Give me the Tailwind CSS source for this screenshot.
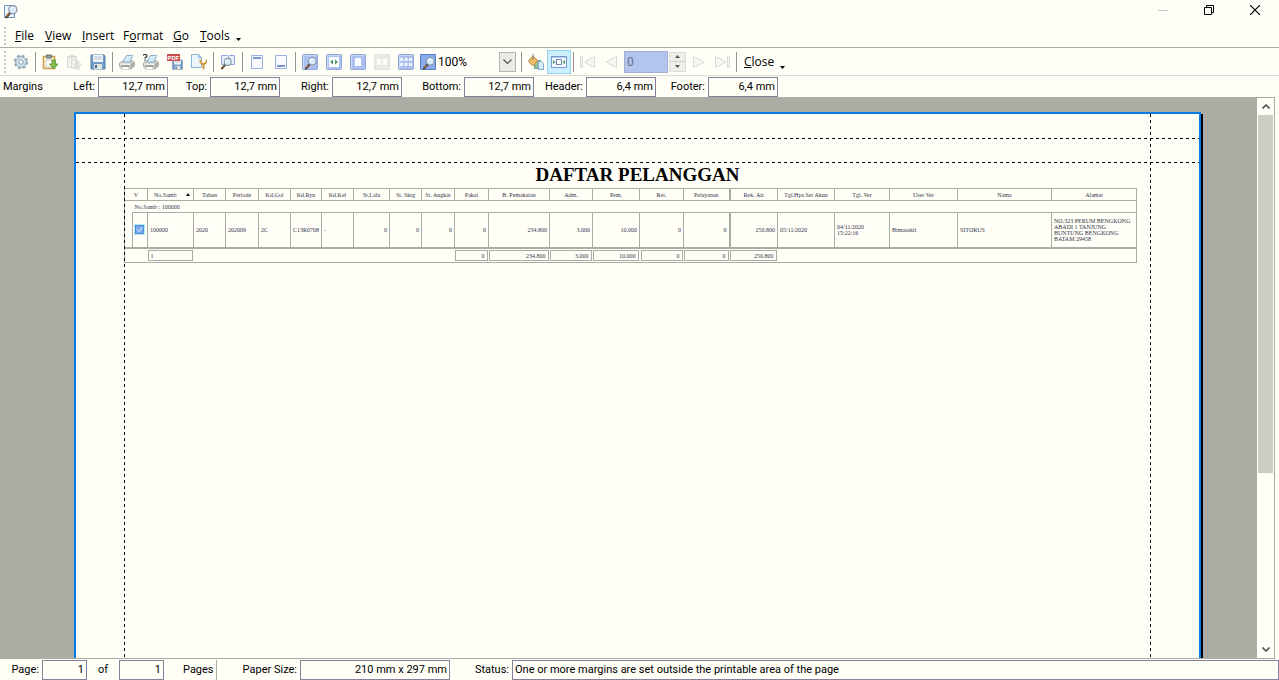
<!DOCTYPE html>
<html lang="en">
<head>
<meta charset="utf-8">
<title>Print Preview</title>
<script src="https://cdn.jsdelivr.net/npm/@tailwindcss/browser@4"></script>
</head>
<body class="flex h-screen flex-col overflow-hidden bg-[#fffff8] font-['Roboto','Liberation_Sans',sans-serif] text-[11px] leading-4 text-black">

<svg class="hidden">
  <symbol id="lens" viewBox="0 0 16 16"><path d="M2.500 14l3.500-4" stroke="#54453c" stroke-width="2.800" stroke-linecap="round"/><path d="M2.500 13.300l2.600-3" stroke="#b98048" stroke-width="1.200"/><circle cx="9.500" cy="6" r="4.300" fill="#d8edfb" stroke="#8793a1" stroke-width="1.300"/><path d="M7 6a2.500 2.500 0 0 1 2.500-2.500" stroke="#fff" stroke-width="1.300" fill="none"/></symbol>
  <symbol id="tile" viewBox="0 0 16 16"><rect x=".5" y=".5" width="15" height="15" rx="1" fill="#abc0ef" stroke="#91a6dd"/><path d="M1.500 14V1.500H14" fill="none" stroke="#c8d6f7"/></symbol>
  <symbol id="printer" viewBox="0 0 16 16"><path d="M.5 9L4 6.500h9l2.500 2v3.500L12 15H3l-2.500-2z" fill="#cdd0ca" stroke="#a2a69f" stroke-width=".8"/><path d="M4 8l3.500-6.500h6L11 8z" fill="#d5ecfb" stroke="#8ab0cf"/><path d="M1.500 9.500h10v3h-10z" fill="#f0f1ec"/><path d="M2 12h8.500" stroke="#6c706a" stroke-width="1.200"/><path d="M11.500 10l3.500-2v3.500l-3.500 3z" fill="#a9ada6"/><path d="M3 13h6l1 2H3.500z" fill="#fff"/></symbol>
  <symbol id="disk" viewBox="0 0 16 16"><path d="M1 1h13l1 1v13H1z" fill="#6f9bc9" stroke="#557fa9"/><path d="M3 1h10v7H3z" fill="#f3f6f6"/><path d="M4 3h8M4 5h8" stroke="#b6c6d6"/><path d="M4 10h8v5H4z" fill="#e2e6e4"/><path d="M5 11h2v3H5z" fill="#48688b"/></symbol>
</svg>

<header>
  <div class="flex h-6 items-center justify-between pl-[3px] pr-[19px]">
    <svg class="size-4" viewBox="0 0 16 16"><path d="M1.500 1.500h10v12h-10z" fill="#eff5fd" stroke="#7293c7"/><use href="#lens" x="1" width="15" height="15"/></svg>
    <div class="flex gap-9 pb-1">
      <button class="size-[10px]" aria-label="Minimize"><svg viewBox="0 0 10 10"><path d="M0 5.500h10" stroke="#c8c8c2"/></svg></button>
      <button class="size-[10px]" aria-label="Restore"><svg viewBox="0 0 10 10" fill="none" stroke="#000"><path d="M.5 2.500h7v7h-7zM2.500 2.500v-2h7v7h-2"/></svg></button>
      <button class="size-[10px]" aria-label="Close window"><svg viewBox="0 0 10 10"><path d="M0 0l10 10M10 0L0 10" stroke="#000" stroke-width="1.200"/></svg></button>
    </div>
  </div>

  <nav class="flex h-6 items-center border-b border-[#a9ada4] pl-1 font-['Open_Sans',sans-serif] text-[12px]">
    <span class="h-[18px] w-[2px] bg-[repeating-linear-gradient(#cbcbc5_0_2px,transparent_2px_4px)]"></span>
    <button class="ml-[9px] w-[18px] whitespace-nowrap text-left"><u>F</u>ile</button>
    <button class="ml-3 w-[25px] whitespace-nowrap text-left"><u>V</u>iew</button>
    <button class="ml-3 w-[29px] whitespace-nowrap text-left"><u>I</u>nsert</button>
    <button class="ml-3 w-[38px] whitespace-nowrap text-left">F<u>o</u>rmat</button>
    <button class="ml-3 w-[15px] whitespace-nowrap text-left"><u>G</u>o</button>
    <button class="ml-3 w-7 whitespace-nowrap text-left"><u>T</u>ools</button>
    <button class="ml-2 mt-2 w-[5px]" aria-label="More menus"><svg viewBox="0 0 5 3"><path d="M0 0h5L2.500 3z"/></svg></button>
  </nav>

  <div class="flex h-7 items-center border-b border-[#dcdcd6] pl-1">
    <span class="mr-[3px] h-[22px] w-[2px] bg-[repeating-linear-gradient(#cbcbc5_0_2px,transparent_2px_4px)]"></span>
    <button class="grid h-6 w-6 place-items-center" aria-label="Page settings"><svg class="size-4" viewBox="0 0 16 16"><circle cx="8" cy="8" r="6.300" fill="none" stroke="#93abba" stroke-width="2" stroke-dasharray="2.800 2.148"/><circle cx="8" cy="8" r="5.300" fill="#d1e2ea" stroke="#8fa9b9"/><circle cx="8" cy="8" r="2.200" fill="#fffff8" stroke="#8aa4b5"/></svg></button>
    <span class="mx-[2px] h-5 w-px bg-[#94968f]"></span>
    <button class="grid h-6 w-6 place-items-center" aria-label="Load report"><svg class="size-4" viewBox="0 0 16 16"><path d="M1.500 2.500h11v12h-11z" fill="#fdf8e8" stroke="#cf9d46" stroke-width="1.600"/><path d="M4.500 1h5v3h-5z" fill="#9da1a4" stroke="#666d70"/><path d="M4 6h7v7H4z" fill="#fff" stroke="#c5cace"/><path d="M10 6h3.500v4H16l-4.200 5L7.500 10H10z" fill="#81bd48" stroke="#57943a" stroke-width=".8"/></svg></button>
    <button class="grid h-6 w-6 place-items-center" aria-label="Unload report" disabled><svg class="size-4" viewBox="0 0 16 16" fill="#f2f2ed" stroke="#dadbd5"><path d="M1.500 2.500h9v11h-9zM4 1h4v3H4zM5.500 6h6v8h-6zM10 15v-4H8l3.800-4L16 11h-2.500v4z"/></svg></button>
    <button class="grid h-6 w-6 place-items-center" aria-label="Save"><svg class="size-4"><use href="#disk"/></svg></button>
    <span class="mx-[2px] h-5 w-px bg-[#94968f]"></span>
    <button class="grid h-6 w-6 place-items-center" aria-label="Print"><svg class="size-4"><use href="#printer"/></svg></button>
    <button class="grid h-6 w-6 place-items-center" aria-label="Print dialog"><svg class="size-4" viewBox="0 0 16 16"><use href="#printer"/><path d="M0 1.500C.5 0 4 0 4 2 4 3.300 2 3 2 4.500M2 5.500v1.300" fill="none" stroke="#333" stroke-width="1.200"/></svg></button>
    <button class="grid h-6 w-6 place-items-center" aria-label="Export to PDF"><svg class="size-4" viewBox="0 0 16 16"><use href="#disk" x="5" y="5" width="11" height="11"/><path d="M0 0h13v7H0z" fill="#c94c4a"/><text x="6.500" y="6" text-anchor="middle" font-size="6" font-weight="bold" font-family="Liberation Sans, sans-serif" fill="#fff">PDF</text></svg></button>
    <button class="grid h-6 w-6 place-items-center" aria-label="Page setup"><svg class="size-4" viewBox="0 0 16 16"><path d="M.5.500h7l3 3v10H.5z" fill="#ecf6fd" stroke="#86b0d8"/><path d="M7.500.5v3h3" fill="#c3dcf2" stroke="#86b0d8"/><path d="M9.500 5.500v2.500l2 2h2l2-2V5.500M12.500 10v5.500" fill="none" stroke="#d49a43" stroke-width="2"/></svg></button>
    <span class="mx-[2px] h-5 w-px bg-[#94968f]"></span>
    <button class="grid h-6 w-6 place-items-center" aria-label="Find"><svg class="size-4" viewBox="0 0 16 16"><path d="M1.500 1.500h6l1 1 1-1h5v9h-13z" fill="#e9eefb" stroke="#8ea6d9"/><path d="M8.500 2v8" stroke="#a7b8df"/><use href="#lens" y="3" width="13" height="13"/></svg></button>
    <span class="mx-[2px] h-5 w-px bg-[#94968f]"></span>
    <button class="grid h-6 w-6 place-items-center" aria-label="Page header"><svg class="size-4" viewBox="0 0 16 16"><path d="M2.500 1.500h11v13h-11z" fill="#f8faff" stroke="#98aee0"/><path d="M4 4h8" stroke="#7b96cd" stroke-width="2"/></svg></button>
    <button class="grid h-6 w-6 place-items-center" aria-label="Page footer"><svg class="size-4" viewBox="0 0 16 16"><path d="M2.500 1.500h11v13h-11z" fill="#f8faff" stroke="#98aee0"/><path d="M4 12h8" stroke="#7b96cd" stroke-width="2"/></svg></button>
    <span class="mx-[2px] h-5 w-px bg-[#94968f]"></span>
    <button class="grid h-6 w-6 place-items-center" aria-label="Zoom"><svg class="size-4" viewBox="0 0 16 16"><use href="#tile"/><use href="#lens" x="2" y="2" width="14" height="14"/></svg></button>
    <button class="grid h-6 w-6 place-items-center" aria-label="Page width"><svg class="size-4" viewBox="0 0 16 16"><use href="#tile"/><path d="M3 3h10v10H3z" fill="#fbfdff"/><path d="M4 8l3-2.500v5zM12 8L9 5.500v5z" fill="#4b9962"/></svg></button>
    <button class="grid h-6 w-6 place-items-center" aria-label="Whole page"><svg class="size-4" viewBox="0 0 16 16"><use href="#tile"/><path d="M5 4h6v8H5z" fill="#fbfdff"/></svg></button>
    <button class="grid h-6 w-6 place-items-center" aria-label="Two pages" disabled><svg class="size-4" viewBox="0 0 16 16"><path d="M.5.5h15v15H.5z" fill="#eaebe5" stroke="#e2e3dd"/><path d="M3 5h4v6H3zM9 5h4v6H9z" fill="#fffff8"/></svg></button>
    <button class="grid h-6 w-6 place-items-center" aria-label="Many pages"><svg class="size-4" viewBox="0 0 16 16"><use href="#tile"/><path d="M2 4h3v3H2zM6.500 4h3v3h-3zM11 4h3v3h-3zM2 9h3v3H2zM6.500 9h3v3h-3zM11 9h3v3h-3z" fill="#edf2ff"/></svg></button>
    <div class="flex w-[101px] items-center pl-[2px] pr-[3px]">
      <svg class="size-4 shrink-0" viewBox="0 0 16 16"><path d="M.5.500h15v15H.5z" fill="#8aabe9" stroke="#5c80c9"/><use href="#lens" x="2" y="2" width="14" height="14"/></svg>
      <input class="w-0 flex-1 bg-transparent pl-[2px] text-[12px] outline-none" aria-label="Zoom level" value="100%">
      <button class="grid h-5 w-[17px] place-items-center border border-[#b4b6af] bg-[#ebece6]" aria-label="Choose zoom level"><svg class="w-[9px]" viewBox="0 0 9 5"><path d="M.5.5l4 4 4-4" fill="none" stroke="#555" stroke-width="1.200"/></svg></button>
    </div>
    <span class="mx-[2px] h-5 w-px bg-[#94968f]"></span>
    <button class="grid h-6 w-[23px] place-items-center" aria-label="Background colour"><svg class="size-4" viewBox="0 0 16 16"><path d="M6.500 6.500h6v8h-6z" fill="#8fc3a4" stroke="#6fa58c"/><path d="M10.500 7.500h3l2 2v6h-5z" fill="#d6edfc" stroke="#7fabd5"/><path d="M.5 6.500L5 2l5 5-4.500 4.500C3 11 1.500 9 .5 6.500z" fill="#efbd68" stroke="#ba8546"/><path d="M5 0v6" stroke="#787e80"/></svg></button>
    <button class="grid h-6 w-6 place-items-center border border-[#94d2f3] bg-[#ccefff]" aria-label="Shrink to page"><svg class="size-4" viewBox="0 0 16 16"><path d="M.5 2.500h15v11H.5z" fill="#f3f9ff" stroke="#7798d7"/><path d="M1 3h14" stroke="#7798d7"/><path d="M5.500 5.500h5v5h-5z" fill="#fff" stroke="#6887b5"/><path d="M2 6l2.500 2L2 10zM14 6l-2.500 2 2.500 2z" fill="#579a63"/></svg></button>
    <span class="mx-[2px] h-5 w-px bg-[#94968f]"></span>
    <button class="grid h-6 w-6 place-items-center" aria-label="First page" disabled><svg class="size-4" viewBox="0 0 16 16" fill="#f7f7f2" stroke="#d9dad4"><path d="M.5 2.500h2v11h-2zM14.500 3v10L10 11.500 4.500 8 10 4.500z"/></svg></button>
    <button class="grid h-6 w-6 place-items-center" aria-label="Previous page" disabled><svg class="size-4" viewBox="0 0 16 16" fill="#f7f7f2" stroke="#d9dad4"><path d="M12.500 3v10L8 11.500 2.500 8 8 4.500z"/></svg></button>
    <input class="h-[22px] w-11 border border-[#a4b0d2] bg-[#b3c4ee] px-[2px] text-[12px] text-[#64708c]" aria-label="Current page" value="0">
    <div class="ml-px grid h-5 w-[17px] grid-rows-2 border border-[#dcddd7] bg-[#eeefe9]">
      <button class="grid place-items-center border-b border-[#d0d1cb]" aria-label="Increase page"><svg class="w-[5px]" viewBox="0 0 5 3"><path d="M0 3h5L2.500 0z" fill="#555"/></svg></button>
      <button class="grid place-items-center" aria-label="Decrease page"><svg class="w-[5px]" viewBox="0 0 5 3"><path d="M0 0h5L2.500 3z" fill="#555"/></svg></button>
    </div>
    <button class="grid h-6 w-6 place-items-center" aria-label="Next page" disabled><svg class="size-4" viewBox="0 0 16 16" fill="#f7f7f2" stroke="#d9dad4"><path d="M3.500 3v10L8 11.500 14.500 8 8 4.500z"/></svg></button>
    <button class="grid h-6 w-6 place-items-center" aria-label="Last page" disabled><svg class="size-4" viewBox="0 0 16 16" fill="#f7f7f2" stroke="#d9dad4"><path d="M1.500 3v10L6 11.500 11.500 8 6 4.500zM13.500 2.500h2v11h-2z"/></svg></button>
    <span class="mx-[2px] h-5 w-px bg-[#94968f]"></span>
    <button class="ml-[5px] w-[30px] whitespace-nowrap text-left font-['Open_Sans',sans-serif] text-[12px]"><u>C</u>lose</button>
    <button class="ml-[6px] mt-3 w-[5px]" aria-label="More tools"><svg viewBox="0 0 5 3"><path d="M0 0h5L2.500 3z"/></svg></button>
  </div>

  <div class="flex h-[21px] items-center">
    <span class="w-[56px] pl-[3px]">Margins</span>
    <label for="ml" class="w-[42px] pr-[3px] text-right">Left:</label><input id="ml" value="12,7 mm" class="h-5 w-[70px] border border-[#86809c] px-[2px] text-right">
    <label for="mt" class="w-[42px] pr-[3px] text-right">Top:</label><input id="mt" value="12,7 mm" class="h-5 w-[70px] border border-[#86809c] px-[2px] text-right">
    <label for="mr" class="w-[52px] pr-[3px] text-right">Right:</label><input id="mr" value="12,7 mm" class="h-5 w-[70px] border border-[#86809c] px-[2px] text-right">
    <label for="mb" class="w-[62px] pr-[3px] text-right">Bottom:</label><input id="mb" value="12,7 mm" class="h-5 w-[70px] border border-[#86809c] px-[2px] text-right">
    <label for="mh" class="w-[52px] pr-[3px] text-right">Header:</label><input id="mh" value="6,4 mm" class="h-5 w-[70px] border border-[#86809c] px-[2px] text-right">
    <label for="mf" class="w-[52px] pr-[3px] text-right">Footer:</label><input id="mf" value="6,4 mm" class="h-5 w-[70px] border border-[#86809c] px-[2px] text-right">
  </div>
</header>

<main class="mr-1 flex min-h-0 flex-1 border-y border-r border-[#a9ada4]">
  <div class="flex min-w-0 flex-1 overflow-hidden bg-[#a9ada4] pl-[74px] pr-14 pt-[14px]">
    <article class="relative min-w-0 flex-1 border-2 border-b-0 border-[#077be6] bg-[#fffff8] px-12 pt-[49px] font-['Liberation_Serif',serif] shadow-[2px_2px_0_#000]">
      <h1 class="h-[25px] text-center text-[19px] font-bold leading-6">DAFTAR PELANGGAN</h1>
      <div class="pr-[14px]">
        <table class="w-full table-fixed border-collapse border border-[#a9ada4] text-[6px] leading-[6px] text-[#33334a]">
          <colgroup>
            <col class="w-[8px]"><col class="w-[15px]"><col class="w-[46px]"><col class="w-[32px]"><col class="w-[33px]"><col class="w-[32px]"><col class="w-[31px]"><col class="w-[32px]"><col class="w-[36px]"><col class="w-[32px]"><col class="w-[33px]"><col class="w-[34px]"><col class="w-[61px]"><col class="w-[43px]"><col class="w-[47px]"><col class="w-[44px]"><col class="w-[46px]"><col class="w-[48px]"><col class="w-[57px]"><col class="w-[55px]"><col class="w-[68px]"><col class="w-[94px]"><col class="w-[85px]">
          </colgroup>
          <thead>
            <tr class="h-3 whitespace-nowrap *:border *:border-[#a9ada4] *:p-0 *:font-normal">
              <th colspan="2">V</th>
              <th><span class="flex items-center justify-between pl-[6px] pr-[3px]">No.Samb <svg class="w-1" viewBox="0 0 4 3"><path d="M0 3h4L2 0z" fill="#000"/></svg></span></th>
              <th>Tahun</th><th>Periode</th><th>Kd.Gol</th><th>Kd.Ryn</th><th>Kd.Kel</th><th>St.Lalu</th><th>St. Skrg</th><th>St. Angkat</th><th>Pakai</th><th>B. Pemakaian</th><th>Adm.</th><th>Pem.</th><th>Ret.</th><th>Pelayanan</th><th class="border-l-2!">Rek. Air</th><th>Tgl.Hps.Ser Akun</th><th>Tgl. Ver</th><th>User Ver</th><th>Nama</th><th>Alamat</th>
            </tr>
          </thead>
          <tbody>
            <tr class="h-3"><td class="p-0"></td><td colspan="22" class="p-0 pl-[2px]">No.Samb : 100000</td></tr>
            <tr class="h-[35px] *:border *:border-b-2 *:border-[#a9ada4] *:px-[2px] *:py-0">
              <td class="border-t-0!"></td>
              <td class="px-0!"><span class="relative ml-[2px] block size-[9px]"><input type="checkbox" checked aria-label="V" class="block size-[9px] appearance-none border border-[#4b8fd8] bg-[#7faaf0] outline outline-[#b5ecf5]"><svg class="pointer-events-none absolute inset-0 size-[9px]" viewBox="0 0 9 9"><path d="M2 4.500l2 2 3-4" fill="none" stroke="#e3edff"/></svg></span></td>
              <td>100000</td><td>2020</td><td>202009</td><td>2C</td><td class="whitespace-nowrap">C13R0708</td><td>-</td>
              <td class="text-right">0</td><td class="text-right">0</td><td class="text-right">0</td><td class="text-right">0</td><td class="text-right">234.800</td><td class="text-right">3.000</td><td class="text-right">10.000</td><td class="text-right">0</td><td class="text-right">0</td><td class="border-l-2! text-right">250.800</td>
              <td>05/11/2020</td><td>04/11/2020<br>15:22:16</td><td>Bimasakti</td><td>SITORUS</td><td class="whitespace-nowrap">NO.323 PERUM BENGKONG<br>ABADI 1 TANJUNG<br>BUNTUNG BENGKONG<br>BATAM 29458</td>
            </tr>
          </tbody>
          <tfoot>
            <tr class="h-[15px] text-right *:p-0">
              <td colspan="2"></td>
              <td><div class="mr-px h-[11px] border border-[#a9ada4] px-[2px] text-left leading-[10px]">1</div></td>
              <td colspan="8"></td>
              <td><div class="mr-px h-[11px] border border-[#a9ada4] px-[2px] leading-[10px]">0</div></td>
              <td><div class="mr-px h-[11px] border border-[#a9ada4] px-[2px] leading-[10px]">234.800</div></td>
              <td><div class="mr-px h-[11px] border border-[#a9ada4] px-[2px] leading-[10px]">3.000</div></td>
              <td><div class="mr-px h-[11px] border border-[#a9ada4] px-[2px] leading-[10px]">10.000</div></td>
              <td><div class="mx-px h-[11px] border border-[#a9ada4] px-[2px] leading-[10px]">0</div></td>
              <td><div class="mr-px h-[11px] border border-[#a9ada4] px-[2px] leading-[10px]">0</div></td>
              <td><div class="mr-px h-[11px] border border-[#a9ada4] px-[2px] leading-[10px]">250.800</div></td>
              <td colspan="5"></td>
            </tr>
          </tfoot>
        </table>
      </div>
      <!-- margin guides -->
      <span class="absolute inset-x-0 top-6 h-px bg-[repeating-linear-gradient(90deg,#000_0_3px,transparent_3px_6px)]"></span>
      <span class="absolute inset-x-0 top-12 h-px bg-[repeating-linear-gradient(90deg,#000_0_3px,transparent_3px_6px)]"></span>
      <span class="absolute inset-y-0 left-12 w-px bg-[repeating-linear-gradient(#000_0_3px,transparent_3px_6px)]"></span>
      <span class="absolute inset-y-0 right-12 w-px bg-[repeating-linear-gradient(#000_0_3px,transparent_3px_6px)]"></span>
    </article>
  </div>
  <div class="flex w-[17px] flex-col px-px">
    <button class="grid h-[17px] place-items-center" aria-label="Scroll up"><svg class="w-2" viewBox="0 0 8 5"><path d="M.5 4.500L4 1l3.500 3.500" fill="none" stroke="#555" stroke-width="1.600"/></svg></button>
    <div class="flex-1"><div class="h-[68%] bg-[#cbcdc5]"></div></div>
    <button class="grid h-[17px] place-items-center" aria-label="Scroll down"><svg class="w-2" viewBox="0 0 8 5"><path d="M.5.5L4 4 7.500.5" fill="none" stroke="#555" stroke-width="1.600"/></svg></button>
  </div>
</main>

<footer class="flex h-[21px] items-center">
  <label for="pg" class="w-[42px] pr-[3px] text-right">Page:</label><input id="pg" value="1" class="h-5 w-[45px] border border-[#86809c] px-[2px] text-right">
  <label for="pc" class="w-8 pl-[11px]">of</label><input id="pc" value="1" class="h-5 w-[45px] border border-[#86809c] px-[2px] text-right">
  <span class="w-[53px] border-r border-[#a9ada4] pl-[19px] leading-5">Pages</span>
  <label for="ps" class="w-[83px] pr-[3px] text-right">Paper Size:</label><input id="ps" value="210 mm x 297 mm" class="h-5 w-[150px] border border-[#86809c] px-[2px] text-right">
  <label for="st" class="w-[62px] pr-[3px] text-right">Status:</label><input id="st" value="One or more margins are set outside the printable area of the page" class="h-5 min-w-0 flex-1 border border-[#86809c] px-[2px]">
</footer>
</body>
</html>
